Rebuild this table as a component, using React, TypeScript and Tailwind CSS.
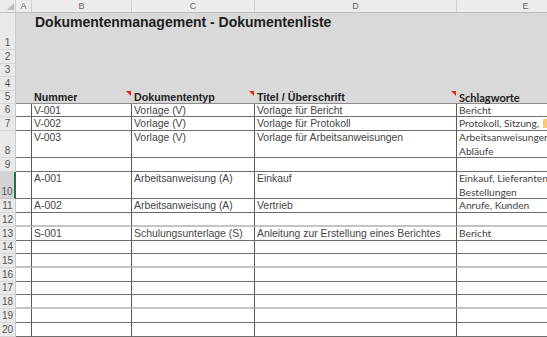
type DataRow = {
  n: number;
  h: string;
  c?: [string, string, string, string[]];
  sel?: boolean;
  thick?: boolean;
  mark?: boolean;
};

const rows: DataRow[] = [
  { n: 6, h: "h-[13px]", c: ["V-001", "Vorlage (V)", "Vorlage für Bericht", ["Bericht"]] },
  { n: 7, h: "h-[14px]", c: ["V-002", "Vorlage (V)", "Vorlage für Protokoll", ["Protokoll, Sitzung,"]], mark: true },
  { n: 8, h: "h-[27px]", c: ["V-003", "Vorlage (V)", "Vorlage für Arbeitsanweisungen", ["Arbeitsanweisungen,", "Abläufe"]] },
  { n: 9, h: "h-[14px]" },
  { n: 10, h: "h-[27px]", sel: true, c: ["A-001", "Arbeitsanweisung (A)", "Einkauf", ["Einkauf, Lieferanten,", "Bestellungen"]] },
  { n: 11, h: "h-[14px]", c: ["A-002", "Arbeitsanweisung (A)", "Vertrieb", ["Anrufe, Kunden"]] },
  { n: 12, h: "h-[14px]", thick: true },
  { n: 13, h: "h-[14px]", c: ["S-001", "Schulungsunterlage (S)", "Anleitung zur Erstellung eines Berichtes", ["Bericht"]] },
  { n: 14, h: "h-[13px]" },
  { n: 15, h: "h-[14px]", thick: true },
  { n: 16, h: "h-[14px]" },
  { n: 17, h: "h-[13px]" },
  { n: 18, h: "h-[14px]", thick: true },
  { n: 19, h: "h-[14px]" },
  { n: 20, h: "h-[14px]" },
];

function Comment() {
  return (
    <span className="absolute top-0 right-[1px] h-0 w-0 border-l-[5px] border-t-[5px] border-l-transparent border-t-[#e8201a]" />
  );
}

function RowHead({ n, h, sel }: { n: number; h: string; sel?: boolean }) {
  return (
    <div
      className={`${h} flex w-[16px] shrink-0 items-end justify-center border-b text-[10px] leading-[13px] text-[#555] ${
        sel ? "border-r-2 border-r-[#217346] border-b-[#c2c2c2] bg-[#d3d3d3]" : "border-r border-r-[#c9c9c9] border-b-[#d6d6d6] bg-[#e9e9e9]"
      }`}
    >
      {n}
    </div>
  );
}

export default function App() {
  return (
    <div className="h-[337px] w-[547px] overflow-hidden bg-white font-['Liberation_Sans',Arial,sans-serif]">
      {/* column letters */}
      <div className="flex h-[13px] border-b border-[#bdbdbd] bg-[#ececec] text-[9px] leading-[12px] text-[#666]">
        <div className="relative w-[16px] shrink-0 border-r border-[#d0d0d0]">
          <svg className="absolute top-[3px] left-[7px]" width="7" height="7" viewBox="0 0 7 7">
            <polygon points="7,0 7,7 0,7" fill="#bdbdbd" />
          </svg>
        </div>
        <div className="w-[16px] shrink-0 border-r border-[#d0d0d0] text-center">A</div>
        <div className="w-[100px] shrink-0 border-r border-[#d0d0d0] text-center">B</div>
        <div className="w-[123px] shrink-0 border-r border-[#d0d0d0] text-center">C</div>
        <div className="w-[202px] shrink-0 border-r border-[#d0d0d0] text-center">D</div>
        <div className="w-[137px] shrink-0 text-center">E</div>
      </div>

      {/* title block */}
      <div className="flex">
        <div className="flex flex-col">
          <RowHead n={1} h="h-[37px]" />
          <RowHead n={2} h="h-[14px]" />
          <RowHead n={3} h="h-[13px]" />
          <RowHead n={4} h="h-[14px]" />
          <RowHead n={5} h="h-[13px]" />
        </div>
        <div className="flex flex-1 flex-col bg-[#d9d9d9]">
          <div className="h-[78px] pt-[1px] pl-[19px] text-[14px] leading-[16px] font-bold whitespace-nowrap text-[#1e1e1e]">
            Dokumentenmanagement - Dokumentenliste
          </div>
          <div className="flex h-[13px] border-b border-[#8c8c8c] text-[10.7px] leading-[13px] font-bold text-[#222]">
            <div className="w-[16px] shrink-0" />
            <div className="relative w-[100px] shrink-0 pl-[2px]">
              Nummer
              <Comment />
            </div>
            <div className="relative w-[123px] shrink-0 pl-[2px]">
              Dokumententyp
              <Comment />
            </div>
            <div className="relative w-[202px] shrink-0 pl-[2px]">
              Titel / Überschrift
              <Comment />
            </div>
            <div className="w-[137px] shrink-0 pl-[2px] font-['Lato',sans-serif] text-[11px]">Schlagworte</div>
          </div>
        </div>
      </div>

      {/* data rows */}
      {rows.map((r) => {
        const line = r.thick ? "border-b-2 border-b-[#c4c4c4]" : "border-b border-b-[#6e6e6e]";
        const cell = `${line} shrink-0 overflow-hidden whitespace-nowrap pl-[2px]`;
        return (
          <div key={r.n} className={`${r.h} flex text-[10.4px] leading-[13.5px] text-[#454545]`}>
            <RowHead n={r.n} h={r.h} sel={r.sel} />
            <div className={`${line} w-[16px] shrink-0 border-r border-r-[#5a5a5a] bg-white`} />
            <div className={`${cell} w-[100px] border-r border-r-[#5a5a5a]`}>{r.c?.[0]}</div>
            <div className={`${cell} w-[123px] border-r border-r-[#5a5a5a]`}>{r.c?.[1]}</div>
            <div className={`${cell} w-[202px] border-r border-r-[#5a5a5a]`}>{r.c?.[2]}</div>
            <div className={`${cell} w-[137px] font-['Lato',sans-serif] text-[10.2px]`}>
              {r.c?.[3].map((t, i) => (
                <div key={i} className="flex items-center">
                  {t}
                  {r.mark && <span className="ml-[4px] inline-block h-[9px] w-[6px] bg-[#f6c979]" />}
                </div>
              ))}
            </div>
          </div>
        );
      })}
    </div>
  );
}
